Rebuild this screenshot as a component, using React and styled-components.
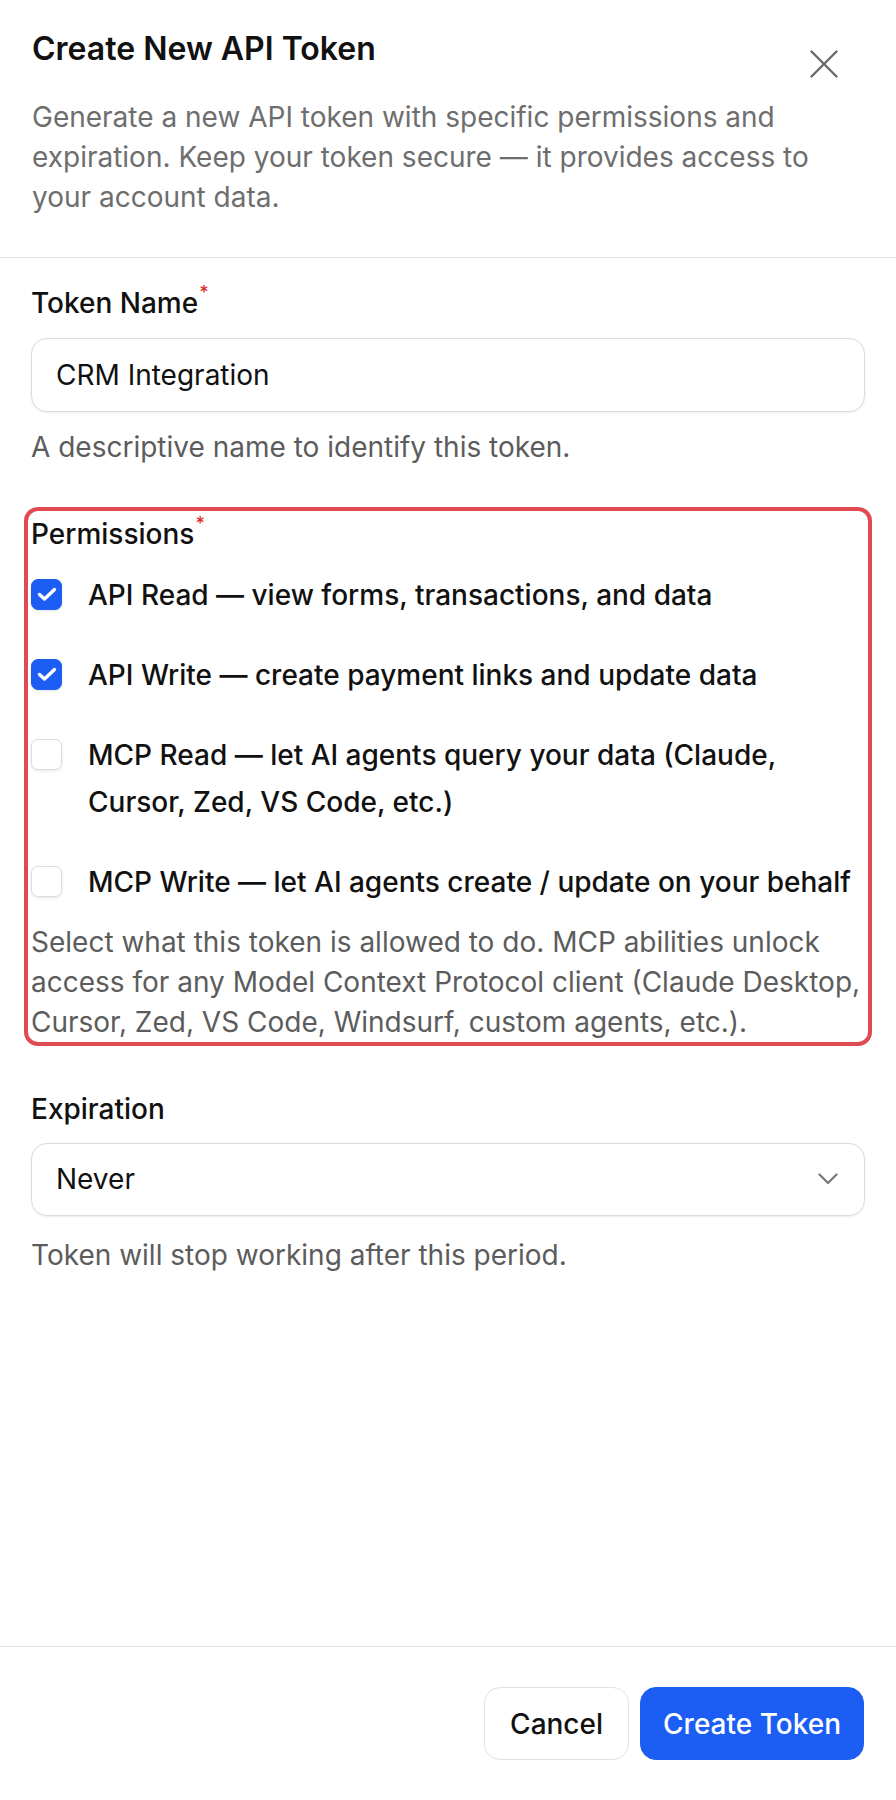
import React, { useState } from 'react';
import styled, { createGlobalStyle } from 'styled-components';

const GlobalStyle = createGlobalStyle`
  * { box-sizing: border-box; }
  body {
    margin: 0;
    background: #ffffff;
    font-family: Inter, "Noto Sans", "Liberation Sans", sans-serif;
    color: #111111;
  }
`;

const Page = styled.div`
  min-height: 1800px;
  display: flex;
  flex-direction: column;
  background: #ffffff;
`;

const Header = styled.header`
  position: relative;
  padding: 26px 31px 40px 32px;
  border-bottom: 1.5px solid #e5e5e5;
`;

const Title = styled.h2`
  margin: 0;
  font-size: 32px;
  line-height: 46.7px;
  font-weight: 600;
  color: #111111;
`;

const Description = styled.p`
  margin: 24px 0 0;
  font-size: 28px;
  line-height: 40px;
  color: #6e6e6e;
`;

const CloseButton = styled.button`
  position: absolute;
  top: 50px;
  right: 58px;
  width: 28px;
  height: 28px;
  padding: 0;
  border: none;
  background: none;
  display: flex;
  align-items: center;
  justify-content: center;
  cursor: pointer;
`;

const Body = styled.main`
  flex: 1;
  display: flex;
  flex-direction: column;
  gap: 47px;
  padding: 25px 31px 0;
`;

const Field = styled.div`
  display: flex;
  flex-direction: column;
  ${({ $highlight }) =>
    $highlight &&
    `
    margin: -7px -7px -4px;
    padding: 3px 3px 0;
    border: 4px solid #e04a52;
    border-radius: 14px;
  `}
`;

const Label = styled.label`
  font-size: 28px;
  line-height: 40px;
  font-weight: 500;
  color: #111111;
`;

const Required = styled.sup`
  color: #e02b2b;
  font-size: 18px;
  line-height: 0;
  margin-left: 1px;
  vertical-align: 14px;
`;

const Input = styled.input`
  margin-top: 15px;
  height: 74px;
  width: 100%;
  padding: 0 24px;
  border: 1.5px solid #dcdcdc;
  border-radius: 16px;
  box-shadow: 0 1px 2px rgba(0, 0, 0, 0.08);
  font-family: inherit;
  font-size: 28px;
  color: #111111;
  outline: none;
`;

const Help = styled.p`
  margin: ${({ $gap }) => $gap || 15}px 0 0;
  font-size: 28px;
  line-height: 40px;
  color: #5c5c5c;
`;

const OptionList = styled.div`
  display: flex;
  flex-direction: column;
  gap: 33px;
  margin-top: 18px;
`;

const Option = styled.label`
  display: flex;
  align-items: flex-start;
  gap: 26px;
  cursor: pointer;
`;

const Box = styled.span`
  flex: none;
  width: 31px;
  height: 31px;
  margin-top: 7px;
  border-radius: 7px;
  display: flex;
  align-items: center;
  justify-content: center;
  background: ${({ $checked }) => ($checked ? '#1c5df4' : '#ffffff')};
  border: 1.5px solid ${({ $checked }) => ($checked ? '#1c5df4' : '#dedede')};
  box-shadow: 0 1px 3px rgba(0, 0, 0, 0.1);
`;

const OptionText = styled.span`
  font-size: 28px;
  line-height: 47px;
  font-weight: 500;
  color: #111111;
`;

const Select = styled.div`
  margin-top: 14px;
  height: 73px;
  padding: 0 26px 0 24px;
  border: 1.5px solid #dcdcdc;
  border-radius: 16px;
  box-shadow: 0 1px 2px rgba(0, 0, 0, 0.08);
  display: flex;
  align-items: center;
  justify-content: space-between;
  font-size: 28px;
  color: #111111;
`;

const Footer = styled.footer`
  display: flex;
  justify-content: flex-end;
  gap: 11px;
  padding: 40px 32px 40px;
  border-top: 1.5px solid #e5e5e5;
`;

const Button = styled.button`
  height: 73px;
  padding: 0 ${({ $primary }) => ($primary ? 22 : 25)}px;
  border-radius: 16px;
  font-family: inherit;
  font-size: 28px;
  font-weight: 500;
  cursor: pointer;
  border: 1.5px solid ${({ $primary }) => ($primary ? '#1c5df4' : '#e2e2e2')};
  background: ${({ $primary }) => ($primary ? '#1c5df4' : '#ffffff')};
  color: ${({ $primary }) => ($primary ? '#ffffff' : '#111111')};
`;

const permissions = [
  { id: 'api_read', label: 'API Read — view forms, transactions, and data', checked: true },
  { id: 'api_write', label: 'API Write — create payment links and update data', checked: true },
  { id: 'mcp_read', label: 'MCP Read — let AI agents query your data (Claude, Cursor, Zed, VS Code, etc.)', checked: false },
  { id: 'mcp_write', label: 'MCP Write — let AI agents create / update on your behalf', checked: false },
];

function Checkbox({ checked }) {
  return (
    <Box $checked={checked}>
      {checked && (
        <svg width="20" height="15" viewBox="0 0 20 15" fill="none">
          <path d="M2.5 7.5 L7.5 12 L17.5 2.5" stroke="#fff" strokeWidth="3.4" strokeLinecap="round" strokeLinejoin="round" />
        </svg>
      )}
    </Box>
  );
}

function App() {
  const [selected, setSelected] = useState(
    permissions.reduce((acc, p) => ({ ...acc, [p.id]: p.checked }), {})
  );

  const toggle = (id) => setSelected((prev) => ({ ...prev, [id]: !prev[id] }));

  return (
    <Page>
      <GlobalStyle />
      <Header>
        <Title>Create New API Token</Title>
        <Description>
          Generate a new API token with specific permissions and expiration. Keep your token
          secure — it provides access to your account data.
        </Description>
        <CloseButton aria-label="Close">
          <svg width="28" height="28" viewBox="0 0 28 28" fill="none">
            <path d="M1.5 1.5 L26.5 26.5 M26.5 1.5 L1.5 26.5" stroke="#6a6a6a" strokeWidth="2.4" strokeLinecap="round" />
          </svg>
        </CloseButton>
      </Header>

      <Body>
        <Field>
          <Label>
            Token Name<Required>*</Required>
          </Label>
          <Input defaultValue="CRM Integration" />
          <Help>A descriptive name to identify this token.</Help>
        </Field>

        <Field $highlight>
          <Label>
            Permissions<Required>*</Required>
          </Label>
          <OptionList>
            {permissions.map((p) => (
              <Option key={p.id} onClick={() => toggle(p.id)}>
                <Checkbox checked={selected[p.id]} />
                <OptionText>{p.label}</OptionText>
              </Option>
            ))}
          </OptionList>
          <Help $gap={16}>
            Select what this token is allowed to do. MCP abilities unlock access for any Model
            Context Protocol client (Claude Desktop, Cursor, Zed, VS Code, Windsurf, custom agents,
            etc.).
          </Help>
        </Field>

        <Field>
          <Label>Expiration</Label>
          <Select>
            <span>Never</span>
            <svg width="20" height="12" viewBox="0 0 20 12" fill="none">
              <path d="M1.5 1.5 L10 10 L18.5 1.5" stroke="#777" strokeWidth="2.2" strokeLinecap="round" strokeLinejoin="round" />
            </svg>
          </Select>
          <Help $gap={19}>Token will stop working after this period.</Help>
        </Field>
      </Body>

      <Footer>
        <Button>Cancel</Button>
        <Button $primary>Create Token</Button>
      </Footer>
    </Page>
  );
}

export default App;
